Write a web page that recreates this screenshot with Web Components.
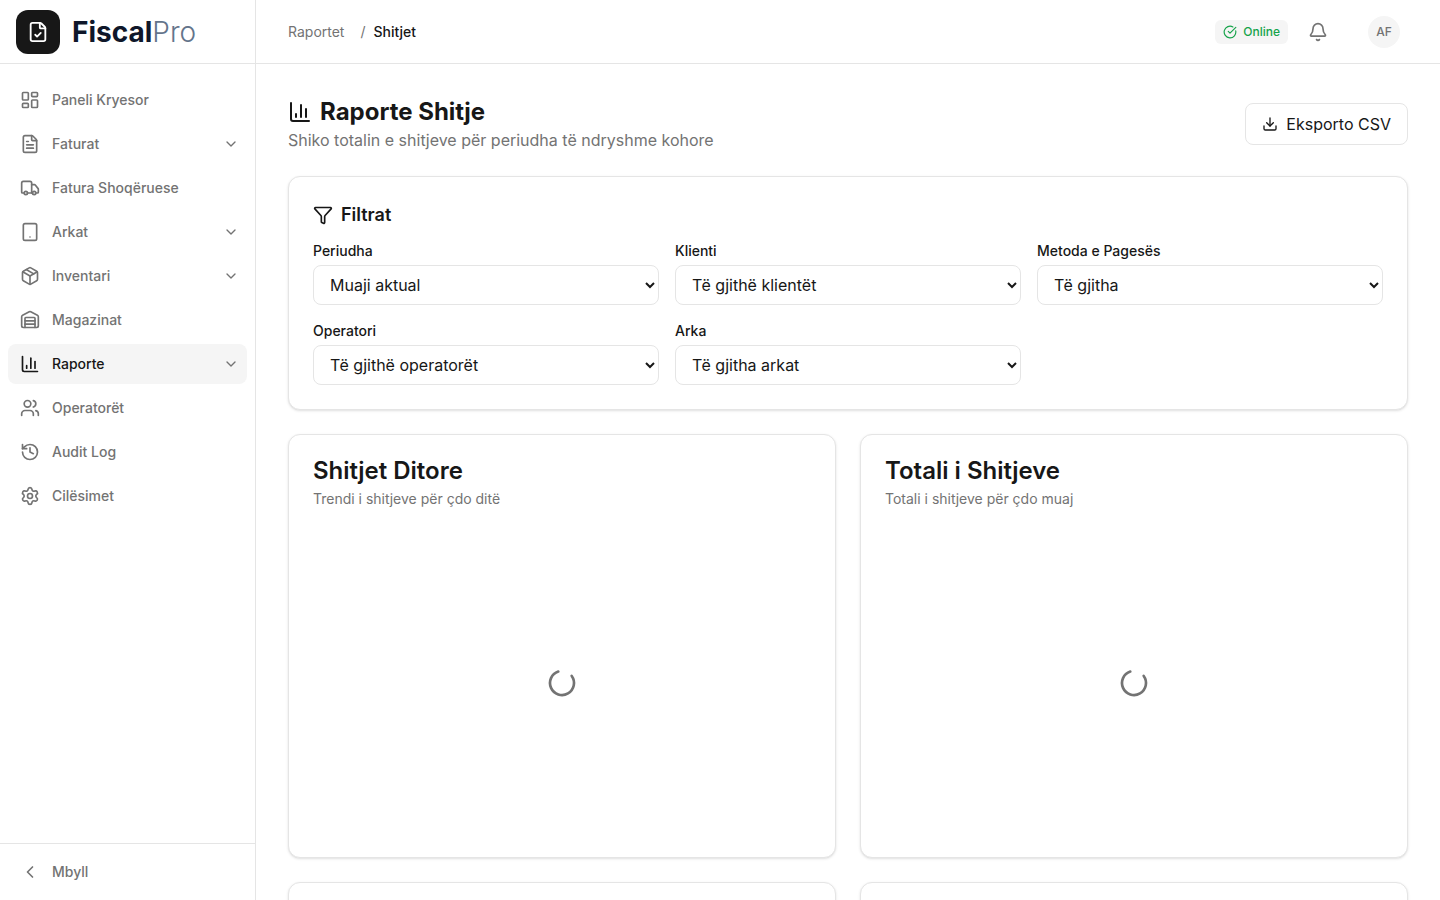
<!DOCTYPE html>
<html lang="sq">
<head>
<meta charset="utf-8">
<meta name="viewport" content="width=device-width, initial-scale=1">
<title>FiscalPro - Raporte Shitje</title>
<style>
    :root {
        --fg: #171717;
        --muted: #737373;
        --border: #e5e5e5;
        --soft: #f5f5f5;
    }
    body {
        margin: 0;
        font-family: Inter, "Liberation Sans", sans-serif;
        font-size: 16px;
        line-height: 24px;
        color: var(--fg);
        background: #fff;
    }
</style>
</head>
<body>
<fiscal-app></fiscal-app>

<script>
// 24x24 outline icons
const ICONS = {
    dashboard: '<rect x="3" y="3" width="7" height="9" rx="1"/><rect x="14" y="3" width="7" height="5" rx="1"/><rect x="14" y="12" width="7" height="9" rx="1"/><rect x="3" y="16" width="7" height="5" rx="1"/>',
    file: '<path d="M6 22a2 2 0 0 1-2-2V4a2 2 0 0 1 2-2h8a2.4 2.4 0 0 1 1.704.706l3.588 3.588A2.4 2.4 0 0 1 20 8v12a2 2 0 0 1-2 2z"/><path d="M14 2v5a1 1 0 0 0 1 1h5"/><path d="M10 9H8"/><path d="M16 13H8"/><path d="M16 17H8"/>',
    fileCheck: '<path d="M6 22a2 2 0 0 1-2-2V4a2 2 0 0 1 2-2h8a2.4 2.4 0 0 1 1.704.706l3.588 3.588A2.4 2.4 0 0 1 20 8v12a2 2 0 0 1-2 2z"/><path d="M14 2v5a1 1 0 0 0 1 1h5"/><path d="m9 15 2 2 4-4"/>',
    truck: '<path d="M14 18V6a2 2 0 0 0-2-2H4a2 2 0 0 0-2 2v11a1 1 0 0 0 1 1h2"/><path d="M15 18H9"/><path d="M19 18h2a1 1 0 0 0 1-1v-3.65a1 1 0 0 0-.22-.624l-3.48-4.35A1 1 0 0 0 17.52 8H14"/><circle cx="17" cy="18" r="2"/><circle cx="7" cy="18" r="2"/>',
    tablet: '<rect x="4" y="2" width="16" height="20" rx="2"/><path d="M12 18h.01"/>',
    package: '<path d="M11 21.73a2 2 0 0 0 2 0l7-4A2 2 0 0 0 21 16V8a2 2 0 0 0-1-1.73l-7-4a2 2 0 0 0-2 0l-7 4A2 2 0 0 0 3 8v8a2 2 0 0 0 1 1.73z"/><path d="M12 22V12"/><path d="M3.29 7 12 12l8.71-5"/><path d="m7.5 4.27 9 5.15"/>',
    warehouse: '<path d="M18 21V10a1 1 0 0 0-1-1H7a1 1 0 0 0-1 1v11"/><path d="M22 19a2 2 0 0 1-2 2H4a2 2 0 0 1-2-2V8a2 2 0 0 1 1.132-1.803l7.95-3.974a2 2 0 0 1 1.837 0l7.948 3.974A2 2 0 0 1 22 8z"/><path d="M6 13h12"/><path d="M6 17h12"/>',
    chart: '<path d="M3 3v16a2 2 0 0 0 2 2h16"/><path d="M18 17V9"/><path d="M13 17V5"/><path d="M8 17v-3"/>',
    users: '<path d="M16 21v-2a4 4 0 0 0-4-4H6a4 4 0 0 0-4 4v2"/><path d="M16 3.128a4 4 0 0 1 0 7.744"/><path d="M22 21v-2a4 4 0 0 0-3-3.87"/><circle cx="9" cy="7" r="4"/>',
    history: '<path d="M3 12a9 9 0 1 0 9-9 9.75 9.75 0 0 0-6.74 2.74L3 8"/><path d="M3 3v5h5"/><path d="M12 7v5l4 2"/>',
    settings: '<path d="M9.671 4.136a2.34 2.34 0 0 1 4.659 0 2.34 2.34 0 0 0 3.319 1.915 2.34 2.34 0 0 1 2.33 4.033 2.34 2.34 0 0 0 0 3.831 2.34 2.34 0 0 1-2.33 4.033 2.34 2.34 0 0 0-3.319 1.915 2.34 2.34 0 0 1-4.659 0 2.34 2.34 0 0 0-3.32-1.915 2.34 2.34 0 0 1-2.33-4.033 2.34 2.34 0 0 0 0-3.831A2.34 2.34 0 0 1 6.35 6.051a2.34 2.34 0 0 0 3.319-1.915"/><circle cx="12" cy="12" r="3"/>',
    down: '<path d="m6 9 6 6 6-6"/>',
    left: '<path d="m15 18-6-6 6-6"/>',
    check: '<path d="M21.801 10A10 10 0 1 1 17 3.335"/><path d="m9 11 3 3L22 4"/>',
    bell: '<path d="M10.268 21a2 2 0 0 0 3.464 0"/><path d="M3.262 15.326A1 1 0 0 0 4 17h16a1 1 0 0 0 .74-1.673C19.41 13.956 18 12.499 18 8A6 6 0 0 0 6 8c0 4.499-1.411 5.956-2.738 7.326"/>',
    download: '<path d="M12 15V3"/><path d="M21 15v4a2 2 0 0 1-2 2H5a2 2 0 0 1-2-2v-4"/><path d="m7 10 5 5 5-5"/>',
    funnel: '<path d="M10 20a1 1 0 0 0 .553.895l2 1A1 1 0 0 0 14 21v-7a2 2 0 0 1 .517-1.341L21.74 4.67A1 1 0 0 0 21 3H3a1 1 0 0 0-.742 1.67l7.225 7.989A2 2 0 0 1 10 14z"/>',
    loader: '<path d="M21 12a9 9 0 1 1-6.219-8.56" transform="rotate(-36 12 12)"/>'
};

class UiIcon extends HTMLElement {
    constructor() {
        super();
        this.attachShadow({mode: "open"});
    }
    connectedCallback() {
        const size = this.getAttribute("size") || 20;
        this.shadowRoot.innerHTML = `
        <style>
            :host { display: block; flex: none; }
            svg { display: block; }
        </style>
        <svg width="${size}" height="${size}" viewBox="0 0 24 24" fill="none" stroke="currentColor"
            stroke-width="2" stroke-linecap="round" stroke-linejoin="round" aria-hidden="true">${ICONS[this.getAttribute("name")]}</svg>`;
    }
}

class BrandLogo extends HTMLElement {
    constructor() {
        super();
        this.attachShadow({mode: "open"}).innerHTML = `
        <style>
            :host {
                display: flex;
                align-items: center;
                gap: 12px;
                height: 63px;
                padding: 0 16px;
                border-bottom: 1px solid var(--border);
            }
            .mark {
                display: grid;
                place-items: center;
                width: 44px;
                height: 44px;
                border-radius: 12px;
                background: var(--fg);
                color: #fff;
            }
            .name {
                font-size: 28px;
                line-height: 36px;
                font-weight: 700;
                color: #0f172a;
            }
            .name span {
                font-weight: 300;
                color: #64748b;
            }
        </style>
        <div class="mark"><ui-icon name="fileCheck" size="22"></ui-icon></div>
        <div class="name">Fiscal<span>Pro</span></div>`;
    }
}

class NavItem extends HTMLElement {
    constructor() {
        super();
        this.attachShadow({mode: "open"});
    }
    connectedCallback() {
        this.shadowRoot.innerHTML = `
        <style>
            :host { display: block; }
            a {
                display: flex;
                align-items: center;
                gap: 12px;
                height: 40px;
                padding: 0 8px 0 12px;
                border-radius: 8px;
                font-size: 14px;
                line-height: 20px;
                font-weight: 500;
                color: var(--muted);
                text-decoration: none;
            }
            a:hover { background: var(--soft); }
            :host([active]) a {
                background: var(--soft);
                color: var(--fg);
            }
            .label { flex: 1; }
            .arrow { color: var(--muted); }
        </style>
        <a href="#">
            <ui-icon name="${this.getAttribute("icon")}"></ui-icon>
            <span class="label"><slot></slot></span>
            ${this.hasAttribute("group") ? '<ui-icon class="arrow" name="down" size="16"></ui-icon>' : ""}
        </a>`;
    }
}

class AppSidebar extends HTMLElement {
    constructor() {
        super();
        this.attachShadow({mode: "open"}).innerHTML = `
        <style>
            :host {
                display: flex;
                flex-direction: column;
                box-sizing: border-box;
                width: 256px;
                flex: none;
                border-right: 1px solid var(--border);
            }
            nav {
                flex: 1;
                display: flex;
                flex-direction: column;
                gap: 4px;
                padding: 16px 8px;
            }
            .foot {
                padding: 8px;
                border-top: 1px solid var(--border);
            }
            button {
                display: flex;
                align-items: center;
                gap: 12px;
                width: 100%;
                height: 40px;
                padding: 0 12px;
                border: 0;
                border-radius: 8px;
                background: none;
                font: inherit;
                font-size: 14px;
                line-height: 20px;
                font-weight: 500;
                color: var(--muted);
            }
        </style>
        <brand-logo></brand-logo>
        <nav>
            <nav-item icon="dashboard">Paneli Kryesor</nav-item>
            <nav-item icon="file" group>Faturat</nav-item>
            <nav-item icon="truck">Fatura Shoqëruese</nav-item>
            <nav-item icon="tablet" group>Arkat</nav-item>
            <nav-item icon="package" group>Inventari</nav-item>
            <nav-item icon="warehouse">Magazinat</nav-item>
            <nav-item icon="chart" group active>Raporte</nav-item>
            <nav-item icon="users">Operatorët</nav-item>
            <nav-item icon="history">Audit Log</nav-item>
            <nav-item icon="settings">Cilësimet</nav-item>
        </nav>
        <div class="foot">
            <button type="button"><ui-icon name="left"></ui-icon>Mbyll</button>
        </div>`;
    }
}

class AppTopbar extends HTMLElement {
    constructor() {
        super();
        this.attachShadow({mode: "open"}).innerHTML = `
        <style>
            :host {
                display: flex;
                align-items: center;
                justify-content: space-between;
                flex: none;
                height: 63px;
                padding: 0 32px;
                border-bottom: 1px solid var(--border);
            }
            .crumbs {
                display: flex;
                gap: 8px;
                font-size: 14px;
                line-height: 20px;
                color: var(--muted);
            }
            .crumbs a {
                margin-right: 8px;
                color: inherit;
                text-decoration: none;
            }
            .crumbs b {
                font-weight: 500;
                color: var(--fg);
            }
            .tools {
                display: flex;
                align-items: center;
                gap: 20px;
            }
            .status {
                display: flex;
                align-items: center;
                gap: 6px;
                padding: 4px 8px;
                border-radius: 6px;
                background: var(--soft);
                font-size: 12px;
                line-height: 16px;
                font-weight: 500;
                color: #16a34a;
            }
            button {
                padding: 0;
                border: 0;
                background: none;
                font: inherit;
                color: var(--muted);
            }
            .user { padding: 0 8px 0 20px; }
            .avatar {
                display: grid;
                place-items: center;
                width: 32px;
                height: 32px;
                border-radius: 50%;
                background: var(--soft);
                font-size: 12px;
                line-height: 16px;
                font-weight: 500;
            }
        </style>
        <nav class="crumbs"><a href="#">Raportet</a><span>/</span><b>Shitjet</b></nav>
        <div class="tools">
            <div class="status"><ui-icon name="check" size="14"></ui-icon>Online</div>
            <button type="button" aria-label="Njoftimet"><ui-icon name="bell"></ui-icon></button>
            <button type="button" class="user"><span class="avatar">AF</span></button>
        </div>`;
    }
}

class FilterSelect extends HTMLElement {
    constructor() {
        super();
        this.attachShadow({mode: "open"});
    }
    connectedCallback() {
        this.shadowRoot.innerHTML = `
        <style>
            :host {
                display: flex;
                flex-direction: column;
                gap: 4px;
                min-width: 0;
            }
            label {
                font-size: 14px;
                line-height: 20px;
                font-weight: 500;
            }
            select {
                width: 100%;
                height: 40px;
                padding: 0 0 0 12px;
                border: 1px solid var(--border);
                border-radius: 8px;
                background-color: #fff;
                font: inherit;
                color: var(--fg);
            }
        </style>
        <label for="field">${this.getAttribute("label")}</label>
        <select id="field"><option>${this.getAttribute("value")}</option></select>`;
    }
}

class UiCard extends HTMLElement {
    constructor() {
        super();
        this.attachShadow({mode: "open"}).innerHTML = `
        <style>
            :host {
                display: block;
                padding: 24px;
                border: 1px solid var(--border);
                border-radius: 12px;
                background: #fff;
                box-shadow: 0 1px 3px rgba(0, 0, 0, 0.1), 0 1px 2px -1px rgba(0, 0, 0, 0.1);
            }
        </style>
        <slot></slot>`;
    }
}

class ChartCard extends HTMLElement {
    constructor() {
        super();
        this.attachShadow({mode: "open"}).innerHTML = `
        <style>
            :host { display: block; }
            h3 {
                margin: 0 0 6px;
                font-size: 24px;
                line-height: 24px;
                font-weight: 600;
            }
            p {
                margin: 0 0 24px;
                min-height: 20px;
                font-size: 14px;
                line-height: 20px;
                color: var(--muted);
            }
            .loading {
                display: grid;
                place-items: center;
                height: 300px;
                color: var(--muted);
            }
        </style>
        <ui-card>
            <h3><slot name="title"></slot></h3>
            <p><slot name="text"></slot></p>
            <div class="loading"><ui-icon name="loader" size="32"></ui-icon></div>
        </ui-card>`;
    }
}

class SalesReport extends HTMLElement {
    constructor() {
        super();
        this.attachShadow({mode: "open"}).innerHTML = `
        <style>
            :host {
                display: flex;
                flex-direction: column;
                gap: 24px;
                padding: 32px;
            }
            .head {
                display: flex;
                align-items: center;
                justify-content: space-between;
            }
            h1, h2 {
                display: flex;
                align-items: center;
                gap: 8px;
                margin: 0;
            }
            h1 {
                font-size: 24px;
                line-height: 32px;
                font-weight: 700;
            }
            h2 {
                margin-bottom: 12px;
                font-size: 18px;
                line-height: 28px;
                font-weight: 600;
            }
            .head p {
                margin: 0;
                color: var(--muted);
            }
            .export {
                display: flex;
                align-items: center;
                gap: 8px;
                padding: 8px 16px;
                border: 1px solid var(--border);
                border-radius: 8px;
                background: #fff;
                font: inherit;
                color: var(--fg);
            }
            .filters {
                display: grid;
                grid-template-columns: repeat(3, 1fr);
                gap: 16px;
            }
            .charts {
                display: grid;
                grid-template-columns: repeat(2, 1fr);
                gap: 24px;
            }
            @media screen and (max-width: 900px) {
                .filters, .charts { grid-template-columns: 1fr; }
            }
        </style>
        <div class="head">
            <div>
                <h1><ui-icon name="chart" size="24"></ui-icon>Raporte Shitje</h1>
                <p>Shiko totalin e shitjeve për periudha të ndryshme kohore</p>
            </div>
            <button type="button" class="export"><ui-icon name="download" size="16"></ui-icon>Eksporto CSV</button>
        </div>
        <ui-card>
            <h2><ui-icon name="funnel"></ui-icon>Filtrat</h2>
            <div class="filters">
                <filter-select label="Periudha" value="Muaji aktual"></filter-select>
                <filter-select label="Klienti" value="Të gjithë klientët"></filter-select>
                <filter-select label="Metoda e Pagesës" value="Të gjitha"></filter-select>
                <filter-select label="Operatori" value="Të gjithë operatorët"></filter-select>
                <filter-select label="Arka" value="Të gjitha arkat"></filter-select>
            </div>
        </ui-card>
        <div class="charts">
            <chart-card>
                <span slot="title">Shitjet Ditore</span>
                <span slot="text">Trendi i shitjeve për çdo ditë</span>
            </chart-card>
            <chart-card>
                <span slot="title">Totali i Shitjeve</span>
                <span slot="text">Totali i shitjeve për çdo muaj</span>
            </chart-card>
            <chart-card></chart-card>
            <chart-card></chart-card>
        </div>`;
    }
}

class FiscalApp extends HTMLElement {
    constructor() {
        super();
        this.attachShadow({mode: "open"}).innerHTML = `
        <style>
            :host {
                display: flex;
                height: 100vh;
            }
            .content {
                flex: 1;
                display: flex;
                flex-direction: column;
                min-width: 0;
            }
            main {
                flex: 1;
                min-height: 0;
                overflow-y: auto;
                scrollbar-width: none;
            }
        </style>
        <app-sidebar></app-sidebar>
        <div class="content">
            <app-topbar></app-topbar>
            <main><sales-report></sales-report></main>
        </div>`;
    }
}

customElements.define("ui-icon", UiIcon);
customElements.define("brand-logo", BrandLogo);
customElements.define("nav-item", NavItem);
customElements.define("app-sidebar", AppSidebar);
customElements.define("app-topbar", AppTopbar);
customElements.define("filter-select", FilterSelect);
customElements.define("ui-card", UiCard);
customElements.define("chart-card", ChartCard);
customElements.define("sales-report", SalesReport);
customElements.define("fiscal-app", FiscalApp);
</script>
</body>
</html>
